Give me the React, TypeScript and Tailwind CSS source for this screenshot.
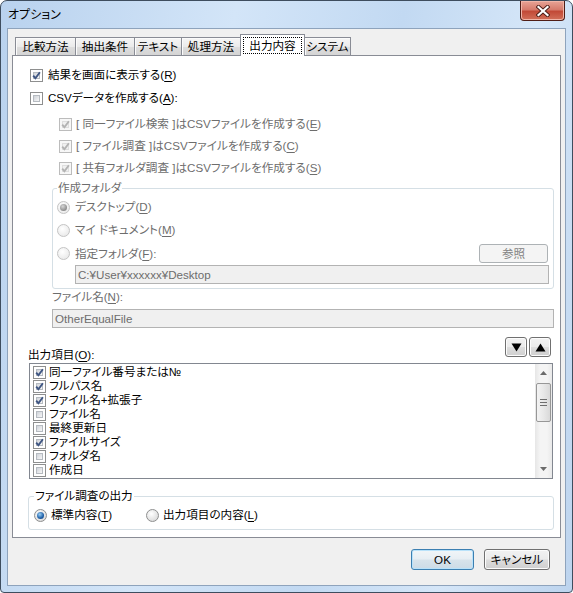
import React from "react";

type BoxProps = { checked?: boolean; disabled?: boolean };

// Win7-style check box, 13x13
function CheckBox({ checked, disabled }: BoxProps) {
  return (
    <span
      className={`relative flex shrink-0 w-[13px] h-[13px] border p-[2px] ${
        disabled ? "border-[#bcbcbc] bg-[#f7f7f7]" : "border-[#8e8f8f] bg-white"
      }`}
    >
      <span
        className={`block w-full h-full ${
          disabled
            ? "bg-[#f0f0f0] border border-[#dedede]"
            : "bg-[linear-gradient(135deg,#cfd3d9,#f7f7f7)] border border-[#b6bbc1]"
        }`}
      />
      {checked && (
        <svg className="absolute left-0 top-0" width="11" height="11" viewBox="0 0 11 11">
          <path
            d="M2.2 5.6 L4.4 8.2 L8.9 2.2"
            fill="none"
            stroke={disabled ? "#b3b3b3" : "#3f5683"}
            strokeWidth="1.9"
          />
        </svg>
      )}
    </span>
  );
}

function RadioDot({ checked, disabled }: BoxProps) {
  return (
    <span
      className={`flex shrink-0 items-center justify-center w-[13px] h-[13px] rounded-full border ${
        disabled
          ? "border-[#c4c4c4] bg-[radial-gradient(circle_at_40%_35%,#ffffff,#ececec_70%)]"
          : "border-[#8e8f8f] bg-[radial-gradient(circle_at_40%_35%,#ffffff,#dcdcdc_75%)]"
      }`}
    >
      {checked && (
        <span
          className={`block w-[7px] h-[7px] rounded-full ${
            disabled
              ? "bg-[radial-gradient(circle_at_40%_35%,#d6d6d6,#8c8c8c_70%)]"
              : "bg-[radial-gradient(circle_at_40%_35%,#9bd0f5,#1d5ea6_60%,#143f76)]"
          }`}
        />
      )}
    </span>
  );
}

function Acc({ children }: { children: React.ReactNode }) {
  return <span className="underline underline-offset-[2px]">{children}</span>;
}

type Btn = { children: React.ReactNode; w: string; disabled?: boolean; primary?: boolean; h?: string };

function Button({ children, w, disabled, primary, h = "h-[21px]" }: Btn) {
  let look =
    "border-[#707070] bg-[linear-gradient(to_bottom,#f2f2f2,#ebebeb_48%,#dddddd_52%,#cfcfcf)] shadow-[inset_0_0_0_1px_#fcfcfc]";
  if (disabled) look = "border-[#adb2b5] bg-[#f4f4f4] text-[#838383]";
  if (primary)
    look =
      "border-[#3c7fb1] bg-[linear-gradient(to_bottom,#f1f5f8,#e7eef3_48%,#d8e3eb_52%,#ccdbe6)] shadow-[inset_0_0_0_1px_#b9e2fa]";
  return (
    <div className={`${w} ${h} flex items-center justify-center rounded-[3px] border ${look}`}>
      {children}
    </div>
  );
}

const tabs = [
  { label: "比較方法", w: "w-[61px]" },
  { label: "抽出条件", w: "w-[60px]" },
  { label: "テキスト", w: "w-[48px]" },
  { label: "処理方法", w: "w-[60px]" },
  { label: "出力内容", w: "w-[65px]", active: true },
  { label: "システム", w: "w-[47px]" },
];

const columns = [
  { name: "同一ファイル番号または№", on: true },
  { name: "フルパス名", on: true },
  { name: "ファイル名+拡張子", on: true },
  { name: "ファイル名", on: false },
  { name: "最終更新日", on: false },
  { name: "ファイルサイズ", on: true },
  { name: "フォルダ名", on: false },
  { name: "作成日", on: false },
];

function CloseButton() {
  return (
    <div className="absolute right-[7px] top-0 w-[45px] h-[20px] rounded-b-[4px] border border-t-0 border-[#4f1d16] bg-[linear-gradient(to_bottom,#e8a496,#d67b6c_45%,#c24a37_55%,#d2705a)] shadow-[inset_0_0_0_1px_#f0b5a8] flex items-center justify-center">
      <svg width="14" height="12" viewBox="0 0 14 12">
        <path d="M2.5 2 L11.5 10 M11.5 2 L2.5 10" stroke="#4a1c16" strokeWidth="4" strokeLinecap="square" />
        <path d="M2.5 2 L11.5 10 M11.5 2 L2.5 10" stroke="#ffffff" strokeWidth="2.2" strokeLinecap="square" />
      </svg>
    </div>
  );
}

function Tri({ up }: { up?: boolean }) {
  return (
    <svg width="11" height="9" viewBox="0 0 11 9">
      <path d={up ? "M0.5 8.5 L5.5 0.5 L10.5 8.5 Z" : "M0.5 0.5 L10.5 0.5 L5.5 8.5 Z"} fill="#000" />
    </svg>
  );
}

function ScrollBar() {
  return (
    <div className="w-[17px] h-full flex flex-col bg-[linear-gradient(to_right,#e6e6e6,#f4f4f4_30%,#f4f4f4_70%,#e9e9e9)]">
      <div className="h-[18px] flex items-center justify-center">
        <svg width="7" height="4" viewBox="0 0 7 4">
          <path d="M0 4 L3.5 0 L7 4 Z" fill="#6b6b6b" />
        </svg>
      </div>
      <div className="mx-[1px] mt-[1px] h-[39px] rounded-[2px] border border-[#979797] bg-[linear-gradient(to_right,#f3f3f3,#e8e8e8_50%,#d9d9d9)] flex flex-col items-center justify-center gap-[2px]">
        <span className="block w-[7px] h-px bg-[#6e6e6e]" />
        <span className="block w-[7px] h-px bg-[#6e6e6e]" />
        <span className="block w-[7px] h-px bg-[#6e6e6e]" />
      </div>
      <div className="flex-1" />
      <div className="h-[18px] flex items-center justify-center">
        <svg width="7" height="4" viewBox="0 0 7 4">
          <path d="M0 0 L7 0 L3.5 4 Z" fill="#6b6b6b" />
        </svg>
      </div>
    </div>
  );
}

export default function App() {
  return (
    <div className="w-[573px] h-[593px] font-['Liberation_Sans','Noto_Sans_CJK_JP',sans-serif] text-[11.6px] leading-[16px] text-black [font-feature-settings:'palt']">
      <div className="relative w-full h-full rounded-t-[7px] rounded-b-[4px] border border-[#3e4d5e] bg-[linear-gradient(100deg,#b9d2ee,#d3e5f8_35%,#c2d9f2_60%,#d5e6f8_80%,#bdd4ee)] flex flex-col">
        {/* title bar */}
        <div className="h-[27px] pl-[7px] flex items-center text-[12px]">オプション</div>
        <CloseButton />

        {/* client area */}
        <div className="mx-[6px] h-[558px] border border-[#8ea3bc] bg-[#f0f0f0] flex flex-col">
          {/* tab strip */}
          <div className="relative z-10 mx-[4px] h-[26px] pt-[5px] pl-[3px] flex items-end">
            {tabs.map((t, i) =>
              t.active ? (
                <div
                  key={t.label}
                  className={`${t.w} -ml-px h-[22px] -mb-px border border-b-0 border-[#898c95] bg-white p-[2px] pb-[2px]`}
                >
                  <div className="h-full border border-dotted border-black flex items-center justify-center">
                    {t.label}
                  </div>
                </div>
              ) : (
                <div
                  key={t.label}
                  className={`${t.w} ${i > 0 ? "-ml-px" : ""} h-[18px] border border-b-0 border-[#898c95] bg-[linear-gradient(to_bottom,#f6f6f6,#ebebeb_50%,#dedede_52%,#d4d4d4)] shadow-[inset_1px_1px_0_#fbfbfb] flex items-center justify-center`}
                >
                  {t.label}
                </div>
              )
            )}
          </div>

          {/* tab page */}
          <div className="mx-[4px] h-[483px] border border-[#898c95] bg-white pl-[17px] flex flex-col">
            <div className="mt-[11px] h-[16px] flex items-center gap-[5px]">
              <CheckBox checked />
              <span>
                結果を画面に表示する(<Acc>R</Acc>)
              </span>
            </div>
            <div className="mt-[7px] h-[16px] flex items-center gap-[5px]">
              <CheckBox />
              <span>
                CSVデータを作成する(<Acc>A</Acc>):
              </span>
            </div>

            <div className="pl-[29px] text-[#6d6d6d]">
              <div className="mt-[10px] h-[16px] flex items-center gap-[4px]">
                <CheckBox checked disabled />
                <span>
                  [ 同一ファイル検索 ]はCSVファイルを作成する(<Acc>E</Acc>)
                </span>
              </div>
              <div className="mt-[6px] h-[16px] flex items-center gap-[4px]">
                <CheckBox checked disabled />
                <span>
                  [ ファイル調査 ]はCSVファイルを作成する(<Acc>C</Acc>)
                </span>
              </div>
              <div className="mt-[6px] h-[16px] flex items-center gap-[4px]">
                <CheckBox checked disabled />
                <span>
                  [ 共有フォルダ調査 ]はCSVファイルを作成する(<Acc>S</Acc>)
                </span>
              </div>
            </div>

            {/* output folder group */}
            <fieldset className="mt-[4px] ml-[22px] w-[502px] rounded-[3px] border border-[#d5dfe5] text-[#6d6d6d]">
              <legend className="ml-[4px] px-[1px] h-[16px]">作成フォルダ</legend>
              <div className="pl-[4px]">
                <div className="mt-[3px] h-[16px] flex items-center gap-[5px]">
                  <RadioDot checked disabled />
                  <span>
                    デスクトップ(<Acc>D</Acc>)
                  </span>
                </div>
                <div className="mt-[7px] h-[16px] flex items-center gap-[5px]">
                  <RadioDot disabled />
                  <span>
                    マイ&nbsp;ドキュメント(<Acc>M</Acc>)
                  </span>
                </div>
                <div className="mt-[6px] h-[19px] pr-[5px] flex items-center justify-between">
                  <div className="flex items-center gap-[5px]">
                    <RadioDot disabled />
                    <span>
                      指定フォルダ(<Acc>F</Acc>):
                    </span>
                  </div>
                  <Button w="w-[69px]" h="h-[19px]" disabled>
                    参照
                  </Button>
                </div>
                <div className="mt-[2px] mb-[4px] ml-[18px] mr-[4px] h-[19px] border border-[#b3b3b3] bg-[#f0f0f0] pl-[2px] flex items-center">
                  C:¥User¥xxxxxx¥Desktop
                </div>
              </div>
            </fieldset>

            <div className="ml-[22px] h-[16px] flex items-center text-[#6d6d6d]">
              ファイル名(<Acc>N</Acc>):
            </div>
            <div className="mt-[4px] ml-[22px] w-[502px] h-[19px] border border-[#b3b3b3] bg-[#f0f0f0] pl-[2px] flex items-center text-[#6d6d6d]">
              OtherEqualFile
            </div>

            {/* output columns */}
            <div className="mt-[9px] -ml-[2px] mr-[9px] h-[26px] flex justify-between">
              <span className="self-end h-[16px]">
                出力項目(<Acc>O</Acc>):
              </span>
              <div className="flex gap-[2px]">
                <Button w="w-[22px]" h="h-[20px]">
                  <Tri />
                </Button>
                <Button w="w-[22px]" h="h-[20px]">
                  <Tri up />
                </Button>
              </div>
            </div>
            <div className="-ml-px w-[524px] h-[116px] border border-[#828790] bg-white flex">
              <ul className="flex-1 pl-[3px] pt-px">
                {columns.map((c) => (
                  <li key={c.name} className="h-[14px] flex items-center gap-[3px]">
                    <CheckBox checked={c.on} />
                    <span className="block h-[14px] leading-[14px]">{c.name}</span>
                  </li>
                ))}
              </ul>
              <ScrollBar />
            </div>

            {/* file survey output group */}
            <fieldset className="mt-[9px] -ml-[2px] w-[526px] rounded-[3px] border border-[#d5dfe5] pb-[6px]">
              <legend className="ml-[5px] px-[1px] h-[16px]">ファイル調査の出力</legend>
              <div className="mt-[3px] pl-[5px] h-[16px] flex items-center">
                <div className="w-[112px] flex items-center gap-[4px]">
                  <RadioDot checked />
                  <span>
                    標準内容(<Acc>T</Acc>)
                  </span>
                </div>
                <div className="flex items-center gap-[4px]">
                  <RadioDot />
                  <span>
                    出力項目の内容(<Acc>L</Acc>)
                  </span>
                </div>
              </div>
            </fieldset>
          </div>

          {/* dialog buttons */}
          <div className="mt-[11px] pr-[15px] flex justify-end gap-[10px]">
            <Button w="w-[63px]" primary>
              OK
            </Button>
            <Button w="w-[66px]">キャンセル</Button>
          </div>
        </div>
      </div>
    </div>
  );
}
